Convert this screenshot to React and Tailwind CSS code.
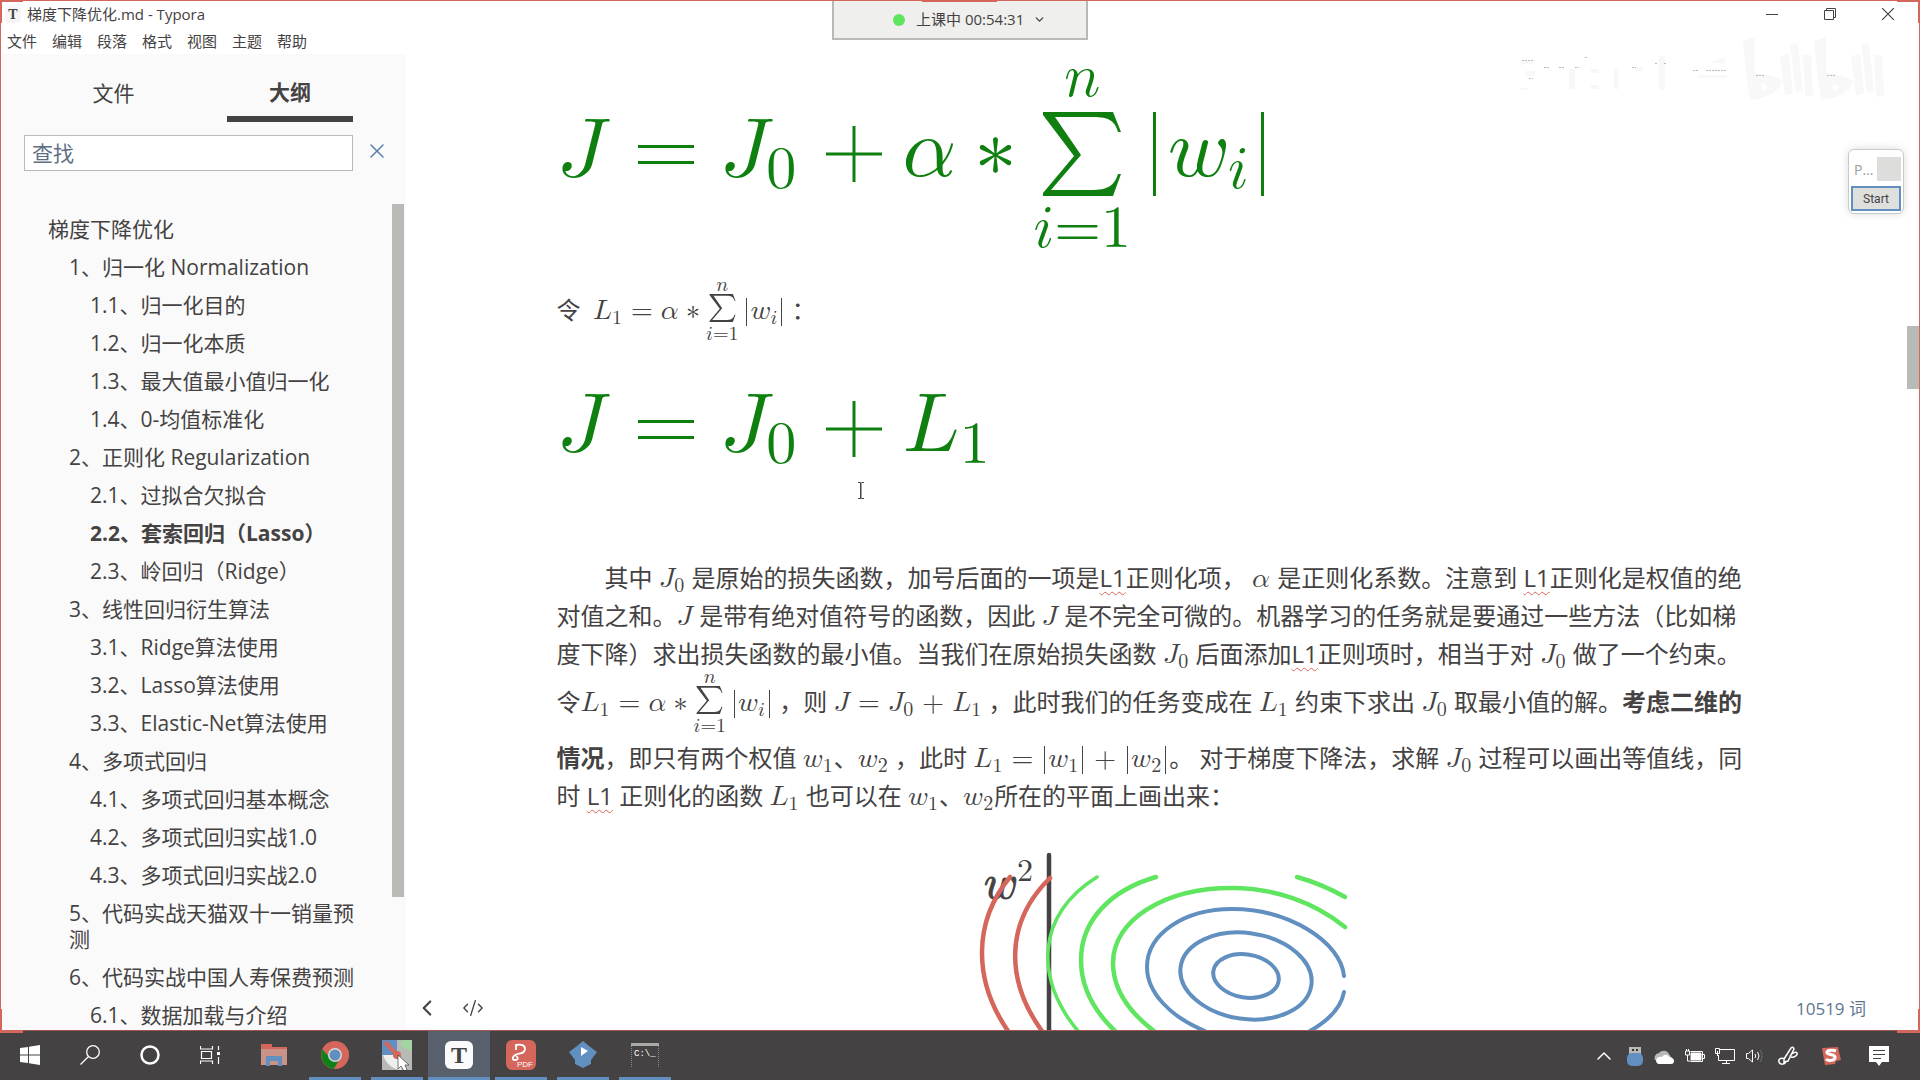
import React from "react";
import { ChevronDown, ChevronLeft, ChevronUp, CodeXml, X } from "lucide-react";

const outline = [
  [0, "梯度下降优化"],
  [1, "1、归一化 Normalization"],
  [2, "1.1、归一化目的"],
  [2, "1.2、归一化本质"],
  [2, "1.3、最大值最小值归一化"],
  [2, "1.4、0-均值标准化"],
  [1, "2、正则化 Regularization"],
  [2, "2.1、过拟合欠拟合"],
  [2, "2.2、套索回归（Lasso）", true],
  [2, "2.3、岭回归（Ridge）"],
  [1, "3、线性回归衍生算法"],
  [2, "3.1、Ridge算法使用"],
  [2, "3.2、Lasso算法使用"],
  [2, "3.3、Elastic-Net算法使用"],
  [1, "4、多项式回归"],
  [2, "4.1、多项式回归基本概念"],
  [2, "4.2、多项式回归实战1.0"],
  [2, "4.3、多项式回归实战2.0"],
  [1, "5、代码实战天猫双十一销量预测"],
  [1, "6、代码实战中国人寿保费预测"],
  [2, "6.1、数据加载与介绍"],
];
const indent = ["pl-[47px]", "pl-[68px]", "pl-[89px]"];

const mathFont = "font-['Latin_Modern_Math','TeX_Gyre_DejaVu_Math','Liberation_Serif',serif]";

/* A single letter in math italic. */
function It({ children }) {
  return <span className="[text-transform:math-auto]">{children}</span>;
}

/* A variable with an optional subscript, set inline. */
function V({ c, s, it }) {
  return (
    <span className={`${mathFont} mr-px text-[28px] leading-none`}>
      <It>{c}</It>
      {s && <span className="align-[-5px] text-[20px] leading-none">{it ? <It>{s}</It> : s}</span>}
    </span>
  );
}
function Op({ c }) {
  return <span className={`${mathFont} mx-[8px] text-[28px] leading-none`}>{c}</span>;
}
function Bar() {
  return <span className="mx-[3px] inline-block h-[28px] w-px bg-[#444] align-[-7px]" />;
}
const sigma = "M0 0H70L78 20H75C72 9 66 5 50 5H12L38 43L8 78H48C65 78 71 74 75 62H78L70 84H0V81L31 44L0 3Z";
function Sum() {
  return (
    <span className={`${mathFont} mx-[5px] inline-flex flex-col items-center leading-none`}>
      <span className="h-[16px] text-[20px] leading-[14px]"><It>n</It></span>
      <svg viewBox="0 0 78 84" className="h-[28px] w-[27px]" fill="currentColor" aria-label="∑"><path d={sigma} /></svg>
      <span className="mt-[3px] h-[17px] text-[20px] leading-[18px]"><It>i</It>=1</span>
    </span>
  );
}

function Typo() {
  return <span className="underline decoration-[#d4665b] decoration-wavy decoration-1 underline-offset-4">L1</span>;
}

/* Display-size pieces. */
function BigV({ c, s, w }) {
  return (
    <span className={`${w} ${s ? "" : "pb-[8px]"} block whitespace-nowrap`}>
      <It>{c}</It>
      {s && <span className="align-[-12px] text-[60px] leading-none">{s}</span>}
    </span>
  );
}
function BigEq() {
  return (
    <span className="flex w-[56px] shrink-0 flex-col gap-[13px]" role="img" aria-label="=">
      <span className="h-[3px] bg-current" />
      <span className="h-[3px] bg-current" />
    </span>
  );
}
function BigPlus() {
  return (
    <svg className="h-[56px] w-[56px] shrink-0" viewBox="0 0 56 56" stroke="currentColor" strokeWidth="3" aria-label="+">
      <path d="M0 28H56M28 0V56" />
    </svg>
  );
}

function TrayIcons() {
  return (
    <div className="flex items-center gap-[10px] pr-[31px] text-white">
      <button aria-label="显示隐藏的图标"><ChevronUp size={24} strokeWidth={1.5} /></button>
      <svg width="18" height="20" viewBox="0 0 18 20"><rect x="3" y="1" width="12" height="7" fill="#b8bab6" /><path d="M6 3h2v2H6zM10 3h2v2h-2z" fill="#333" /><rect x="1" y="7" width="16" height="13" rx="5" fill="#618fbf" /></svg>
      <svg width="20" height="16" viewBox="0 0 20 16"><path d="M1 12a5 5 0 0 1 4-7 6 6 0 0 1 10 1l2 3-8 6z" fill="#b8bab6" /><path d="M2 12c1-3 4-4 6-3 2-3 6-3 7 0 3 0 5 2 5 4s-1 3-3 3H5c-2 0-3-2-3-4z" fill="#fff" /></svg>
      <svg width="21" height="16" viewBox="0 0 21 16" fill="none" stroke="#fff"><path d="M1.500 3v4h4V3zM2.500 3V1M4.500 3V1M3.500 7v6h3M6.500 3.500h12v10h-12M18.500 6.500h2v4h-2" /><path d="M7 5h10v7H7z" fill="#fff" /></svg>
      <svg width="20" height="18" viewBox="0 0 20 18" fill="none" stroke="#fff"><path d="M5 2.500h14.500v11H3.500V8M11.500 13.500v3M7 16.500h8M.5 1.500h4v5h-4zM2.500 4v5" /></svg>
      <svg width="22" height="16" viewBox="0 0 22 16" fill="none" stroke="#fff"><path d="M1.500 5.500v5h2L7.500 14V2L3.500 5.500zM10 6q1.500 2 0 4M12.500 4q3 4 0 8" /><path d="M15 2q4 6 0 12" stroke="#8aa" strokeDasharray="1 1" /></svg>
      <svg width="22" height="20" viewBox="0 0 22 20" fill="none" stroke="#fff" strokeWidth="1.500"><path d="M7 13 14 2q2-2 3 1L11 15l-4 1zM8 13c-4-2-7 0-6 3s6 3 7-1M13 10c2-3 6-5 7-3s-3 5-6 4" /></svg>
      <svg className="ml-[12px]" width="20" height="18" viewBox="0 0 20 18"><path d="M1 1 17 0l1 5 2 8-5 1-1 3-10 1-1-5z" fill="#d4665b" /><path d="M15 4C10 2 5 4 6 6s9 1 8 5c-1 3-7 3-9 1" fill="none" stroke="#fff" strokeWidth="3" /></svg>
      <button aria-label="通知" className="ml-[18px]"><svg width="20" height="20" viewBox="0 0 20 20"><path d="M0 0h20v16h-7l-3 4-3-4H0z" fill="#fff" /><path d="M4 4.500h12M4 8.500h12M4 12.500h8" stroke="#444242" /></svg></button>
    </div>
  );
}

function TaskButton({ label, running, active, children }) {
  return (
    <button
      aria-label={label}
      className={`flex h-full items-center justify-center ${active ? "bg-[#57606c]" : ""} ${running ? "w-[62px]" : "w-[60px]"}`}
    >
      <span className={`flex h-full items-center justify-center border-b-[3px] pt-px ${running ? "border-[#618fbf]" : "border-transparent"} ${active ? "w-full" : "w-[52px]"}`}>
        {children}
      </span>
    </button>
  );
}

function Taskbar() {
  return (
    <footer className="relative z-20 flex h-[50px] shrink-0 items-center justify-between border-t border-[#a0564f] bg-[#444242]">
      <nav className="flex h-full">
        <TaskButton label="开始">
          <svg width="20" height="20" viewBox="0 0 20 20" fill="#fff"><path d="M0 3 8 2v7.500H0zM9 1.800 20 0v9.500H9zM0 10.500h8V18l-8-1zM9 10.500h11V20L9 18.200z" /></svg>
        </TaskButton>
        <TaskButton label="搜索">
          <svg width="20" height="20" viewBox="0 0 20 20" fill="none" stroke="#fff" strokeWidth="1.300"><circle cx="13" cy="7" r="6.300" /><path d="M8.500 11.500.5 19.500" /></svg>
        </TaskButton>
        <TaskButton label="Cortana">
          <svg width="20" height="20" viewBox="0 0 20 20"><circle cx="10" cy="10" r="8.500" fill="none" stroke="#fff" strokeWidth="2.500" /></svg>
        </TaskButton>
        <TaskButton label="任务视图">
          <svg width="21" height="20" viewBox="0 0 21 20" fill="none" stroke="#fff" strokeWidth="1.200"><path d="M.5 1v3h12V1M.5 19v-3h12v3M1.500 6.500h10v7h-10zM18.500 1v4M18.500 12v7" /><path d="M17 7h3v3h-3z" fill="#fff" stroke="none" /></svg>
        </TaskButton>
        <div className="flex pl-[4px]">
          <TaskButton label="文件资源管理器">
            <svg width="26" height="22" viewBox="0 0 26 22"><path d="M0 0h11v4H0z" fill="#d4665b" /><path d="M0 3h26v18H0z" fill="#c99388" /><path d="M0 3h26v2H0z" fill="#d4665b" /><path d="M5 12h16v10h-4v-5H9v5H5z" fill="#618fbf" /></svg>
          </TaskButton>
          <TaskButton label="Chrome" running>
            <svg width="28" height="28" viewBox="0 0 28 28"><circle cx="14" cy="14" r="14" fill="#d4665b" /><path d="M1 8C-2 18 4 27 13 28l5-9-8-1z" fill="#108018" /><path d="m13 28 6-10V9h8c3 9-3 19-14 19z" fill="#d4665b" /><circle cx="14" cy="14" r="7" fill="#d8d8d6" /><circle cx="14" cy="14" r="5.500" fill="#618fbf" /></svg>
          </TaskButton>
          <TaskButton label="绘图" running>
            <svg width="30" height="30" viewBox="0 0 30 30"><path d="M0 0h30v30H0z" fill="#b8bab6" /><path d="M0 0h15v15H0z" fill="#618fbf" /><path d="M20 0h10v12L18 6z" fill="#a4d4a2" /><path d="M1 15h14l5 15q-14-1-19-15z" fill="#eee" /><path d="m3 2 12 13" stroke="#d4665b" strokeWidth="4" /><circle cx="15" cy="15" r="4" fill="#d4665b" /><path d="M16 15v14l3-3 3 5 3-1-2-5h4z" fill="#fff" stroke="#444" strokeWidth=".7" /></svg>
          </TaskButton>
          <TaskButton label="Typora" running active>
            <span className="flex size-[28px] items-center justify-center rounded-[6px] bg-[#fafafa] font-['Liberation_Serif',serif] text-[24px] font-bold leading-none text-[#444]">T</span>
          </TaskButton>
          <TaskButton label="PDF" running>
            <span className="flex size-[30px] flex-col items-end rounded-[6px] bg-[#d4665b] pr-[3px] text-white">
              <svg className="mr-[4px]" width="20" height="21" viewBox="0 0 20 21" fill="none" stroke="#fff" strokeWidth="1.800"><path d="M7 10V5c5-1 9 0 9 4 0 5-6 4-10 6-3 2-3 5 0 5s4-2 1-4" /></svg>
              <span className="font-['Liberation_Sans',sans-serif] text-[8px] leading-none">PDF</span>
            </span>
          </TaskButton>
          <TaskButton label="播放器" running>
            <svg width="28" height="28" viewBox="0 0 28 28"><path d="M8 5 14 0l6 5 8 6-6 8v4l-8 4-8-4v-4L0 11z" fill="#618fbf" /><path d="m12 6 7 4-7 5z" fill="#fff" /></svg>
          </TaskButton>
          <TaskButton label="命令提示符" running>
            <svg width="28" height="24" viewBox="0 0 28 24"><path d="M.5 24V1h27v23" stroke="#8a8c8a" fill="none" strokeDasharray="1 1" /><path d="M0 0h28v3H0z" fill="#a8aaa6" /><text x="3" y="13" fontSize="9" fill="#fff" fontFamily="Liberation Mono, monospace">C:\_</text></svg>
          </TaskButton>
        </div>
      </nav>
      <TrayIcons />
    </footer>
  );
}

function Figure() {
  return (
    <svg className="mt-[35px] ml-[412px] block h-[180px] w-[400px]" viewBox="0 0 400 180" fill="none" role="img" aria-label="L1 等值线图">
      <path d="M80 5V180" stroke="#444242" strokeWidth="4.500" strokeLinecap="round" />
      <text x="15" y="48" fontSize="46" stroke="#444242" className="[text-transform:math-auto] font-['Latin_Modern_Math','Liberation_Serif',serif]" fill="#444242">w</text>
      <text x="48" y="31" fontSize="32" className="font-['Latin_Modern_Math','Liberation_Serif',serif]" fill="#444242">2</text>
      <g strokeLinecap="round">
        <g stroke="#d4665b" strokeWidth="4.500">
          <path d="M41 27C4 72 4 130 39 181" />
          <path d="M81 28C36 72 36 130 73 181" />
        </g>
        <g stroke="#60e560" strokeWidth="4.500">
          <path d="M128 27C66 66 66 130 109 181" strokeWidth="3.500" />
          <path d="M187 27C142 40 112 70 112 110C112 135 124 160 146 181" />
          <path d="M376 77C345 52 305 38 263 38C195 38 144 70 144 113C144 140 160 162 185 181" />
          <path d="M328 27Q353 34 376 47" />
        </g>
        <g stroke="#618fbf" strokeWidth="4">
          <path d="M375 126C372 92 320 59 263 59C215 59 178 84 178 117C178 143 202 167 236 181" />
          <path d="M375 142Q371 164 341 181" />
          <ellipse cx="277" cy="126" rx="66" ry="43" transform="rotate(8 277 126)" />
          <ellipse cx="277" cy="126" rx="33" ry="21.500" transform="rotate(9 277 126)" />
        </g>
      </g>
    </svg>
  );
}

function Watermark() {
  return (
    <svg className="absolute top-[34px] right-[30px] h-[70px] w-[375px]" viewBox="1515 34 375 70" aria-hidden="true">
      <g fill="#f8f8f8">
        {[0, 71].map((dx) => (
          <path key={dx} transform={`translate(${dx} 0)`} d="M1744 40 1756 36V72Q1784 76 1783 82Q1775 97 1751 99L1748 80ZM1781 55l9-2 4 39-8 3zM1791 43l8-1 5 48-7 2zM1804 54h8l2 40-8 2zM1763 82v8l7-3z" fillRule="evenodd" />
        ))}
        <path d="M1522 60h12v3h-12zM1526 70h10v5h-10zM1522 87h7v2h-7zM1570 68h6v20h-6zM1592 68h8v4h-8zM1592 84h8v4h-8zM1615 68h5v20h-5zM1636 66h8v4h-8zM1660 55h6v34h-6zM1715 60l11-4v6h-14zM1700 74h28v3h-28z" />
      </g>
      <path d="M1523 59.500h11M1545 66.500h5M1560 66.500h5M1576 66.500h4M1586 56.500h3M1633 66.500h4M1656 62.500h3M1665 62.500h3M1694 69.500h6M1707 69.500h21M1530 77.500h4M1757 74.500h9M1828 74.500h9" stroke="#b8bab6" strokeDasharray="2 1" />
    </svg>
  );
}

function Line({ children, className = "h-[38px]" }) {
  return <span className={`flex items-center whitespace-pre ${className}`}><span>{children}</span></span>;
}

export default function App() {
  return (
    <div className="relative flex h-screen flex-col overflow-hidden bg-white font-['Open_Sans','Noto_Sans_CJK_SC',sans-serif] text-[#444242]">
      <div className="relative flex min-h-0 flex-1 flex-col border-x border-t border-[#d4665b]">
        <header className="flex h-[27px] shrink-0 items-center justify-between text-[15px]">
          <div className="flex items-center gap-[6px] pl-[4px]">
            <span className="flex size-[16px] items-center justify-center rounded-sm bg-[#f5f5f5] font-['Liberation_Serif',serif] text-[14px] font-bold">T</span>
            <h1>梯度下降优化.md - Typora</h1>
          </div>
          <div className="flex items-center gap-[46px] pr-[25px] pb-[2px]">
            <button aria-label="最小化"><svg width="12" height="12" stroke="#444"><path d="M0 6.500h12" /></svg></button>
            <button aria-label="还原"><svg width="12" height="12" fill="none" stroke="#444"><path d="M.5 2.500h9v9h-9zM2.500 2V.5h9v9H10" /></svg></button>
            <button aria-label="关闭"><svg width="12" height="12" stroke="#444" strokeWidth="1.200"><path d="m0 0 12 12M12 0 0 12" /></svg></button>
          </div>
        </header>
        <nav className="flex h-[26px] shrink-0 gap-[15px] pt-px pl-[6px] text-[15px]">
          {["文件", "编辑", "段落", "格式", "视图", "主题", "帮助"].map((m) => (
            <button key={m} className="flex items-center leading-none">{m}</button>
          ))}
        </nav>

        <div className="flex min-h-0 flex-1">
          <aside className="flex w-[405px] shrink-0 flex-col bg-[#fafafa]">
            <div className="flex pl-[49px] text-[21px]">
              <button className="h-[68px] w-[127px] pt-[11px] text-center">文件</button>
              <button className="ml-[50px] h-[68px] w-[126px] border-b-[6px] border-[#444242] pt-[16px] text-center font-bold">大纲</button>
            </div>
            <div className="mt-[13px] flex items-center pl-[23px]">
              <input aria-label="查找" placeholder="查找" className="h-[36px] w-[329px] border border-[#b8bab6] bg-white px-[7px] text-[21px] placeholder:text-[#5f7085]" />
              <button aria-label="清除" className="ml-[12px] pb-[4px] text-[#5a7fae]"><X size={24} strokeWidth={1.5} /></button>
            </div>
            <div className="mt-[33px] flex min-h-0 flex-1 overflow-hidden">
              <ul className="min-w-0 flex-1 pt-[6px] text-[21px] leading-[26px]">
                {outline.map(([level, text, on]) => (
                  <li key={text} className={`${indent[level]} py-[6px] pr-[36px] ${on ? "font-bold" : ""}`}>
                    <a href="#write">{text}</a>
                  </li>
                ))}
              </ul>
              <div className="mr-[2px] h-[693px] w-[12px] shrink-0 bg-[#b8bab6]" />
            </div>
          </aside>

          <main id="write" className="relative min-w-0 flex-1 overflow-hidden pr-[14px]">
            <article className="mx-auto w-full max-w-[1198px] text-[24px]">
              <div className={`flex h-[200px] items-center text-[84px] leading-none text-[#0f8010] ${mathFont}`}>
                <BigV c="J" w="w-[81px]" />
                <BigEq />
                <BigV c="J" s="0" w="ml-[26px] w-[106px]" />
                <BigPlus />
                <BigV c="α" w="ml-[21px] w-[72px]" />
                <BigV c="∗" w="w-[59px]" />
                <span className="mr-[22px] flex flex-col items-center">
                  <span className="h-[58px] text-[60px] leading-[48px]"><It>n</It></span>
                  <svg viewBox="0 0 78 84" className="h-[84px] w-[78px]" fill="currentColor" aria-label="∑"><path d={sigma} /></svg>
                  <span className="h-[58px] text-[60px] leading-[66px]"><It>i</It>=1</span>
                </span>
                <span className="flex h-[84px] items-center border-x-[3px] border-current px-[12px]">
                  <BigV c="w" s={<It>i</It>} w="" />
                </span>
              </div>
              <p className="mt-[26px] flex h-[60px] items-center whitespace-pre">
                <span>令  </span><span><V c="L" s="1" /><Op c="=" /><V c="α" /> <V c="∗" /></span>
                <Sum />
                <span><Bar /><V c="w" s="i" it /><Bar /> ：</span>
              </p>
              <div className={`mt-[39px] flex h-[100px] items-center text-[84px] leading-none text-[#0f8010] ${mathFont}`}>
                <BigV c="J" w="w-[81px]" />
                <BigEq />
                <BigV c="J" s="0" w="ml-[26px] w-[106px]" />
                <BigPlus />
                <BigV c="L" s="1" w="ml-[21px]" />
              </div>
              <p className="mt-[80px] text-[24px] leading-[38px]">
                <Line className="h-[38px] pl-[48px]">其中 <V c="J" s="0" /> 是原始的损失函数，加号后面的一项是<Typo />正则化项， <V c="α" /> 是正则化系数。注意到 <Typo />正则化是权值的绝</Line>
                <Line>对值之和。<V c="J" /> 是带有绝对值符号的函数，因此 <V c="J" /> 是不完全可微的。机器学习的任务就是要通过一些方法（比如梯</Line>
                <Line>度下降）求出损失函数的最小值。当我们在原始损失函数 <V c="J" s="0" /> 后面添加<Typo />正则项时，相当于对 <V c="J" s="0" /> 做了一个约束。</Line>
                <span className="flex h-[58px] items-center whitespace-pre">
                  <span>令<V c="L" s="1" /><Op c="=" /><V c="α" /> <V c="∗" /></span>
                  <Sum />
                  <span><Bar /><V c="w" s="i" it /><Bar /> ，则 <V c="J" /><Op c="=" /><V c="J" s="0" /><Op c="+" /><V c="L" s="1" /> ，此时我们的任务变成在 <V c="L" s="1" /> 约束下求出 <V c="J" s="0" /> 取最小值的解。<b>考虑二维的</b></span>
                </span>
                <Line className="mt-[8px] h-[38px]"><b>情况</b>，即只有两个权值 <V c="w" s="1" />、<V c="w" s="2" /> ，此时 <V c="L" s="1" /><Op c="=" /><Bar /><V c="w" s="1" /><Bar /><Op c="+" /><Bar /><V c="w" s="2" /><Bar />。 对于梯度下降法，求解 <V c="J" s="0" /> 过程可以画出等值线，同</Line>
                <Line>时 <Typo /> 正则化的函数 <V c="L" s="1" /> 也可以在 <V c="w" s="1" />、<V c="w" s="2" />所在的平面上画出来：</Line>
              </p>
              <Figure />
            </article>

            <svg className="absolute top-[428px] left-[451px]" width="8" height="18" viewBox="0 0 8 18" stroke="#444" fill="none"><path d="M1 .5h2.500v16H1M7 .5H4.500M7 16.500H4.500M4 1v16" /></svg>
            <div className="absolute bottom-[9px] left-[8px] flex items-center gap-[22px]">
              <button aria-label="返回"><ChevronLeft size={26} strokeWidth={2} /></button>
              <button aria-label="源代码模式"><CodeXml size={22} strokeWidth={1.5} /></button>
            </div>
            <span className="absolute right-[53px] bottom-[9px] text-[17px] text-[#60758f]">10519 词</span>
            <div className="absolute top-[272px] right-0 h-[63px] w-[12px] bg-[#b8bab6]" />
          </main>
        </div>

        <Watermark />

        <div className="absolute top-0 left-1/2 flex h-[39px] w-[256px] -translate-x-1/2 items-center border-x-2 border-b-2 border-[#b8bab6] bg-[#efefed] pl-[59px] text-[15px]">
          <span className="size-[12px] rounded-full bg-[#60e560]" />
          <span className="ml-[11px]">上课中 00:54:31</span>
          <ChevronDown className="ml-[9px]" size={13} strokeWidth={2.5} />
          <span className="absolute top-0 left-[88px] h-px w-[75px] bg-[#d4665b]" />
        </div>

        <div className="absolute top-[148px] right-[15px] flex w-[56px] flex-col rounded-[6px] border border-[#c8cac6] bg-white p-[2px] shadow-[0_0_10px_#ddd]">
          <div className="flex h-[34px] items-start justify-between pt-[5px] pl-[3px] text-[14px] text-[#9a9c98]">
            <span className="pt-[2px]">P...</span>
            <span className="h-[24px] w-[24px] bg-[#dddedc]" />
          </div>
          <button className="h-[25px] border-2 border-[#618fbf] bg-[#dfe0de] font-['Roboto',sans-serif] text-[12px] leading-none">Start</button>
        </div>
      </div>
      <div className="pointer-events-none absolute top-0 left-0 h-[23px] w-[23px] border-t-2 border-l-2 border-[#d4665b]" />
      <div className="pointer-events-none absolute top-0 right-0 h-[23px] w-[23px] border-t-2 border-r-2 border-[#d4665b]" />
      <div className="pointer-events-none absolute bottom-[47px] left-0 z-30 h-[24px] w-[23px] border-b-[3px] border-l-2 border-[#d4665b]" />
      <div className="pointer-events-none absolute right-0 bottom-[47px] z-30 h-[24px] w-[23px] border-r-2 border-b-[3px] border-[#d4665b]" />
      <Taskbar />
    </div>
  );
}
